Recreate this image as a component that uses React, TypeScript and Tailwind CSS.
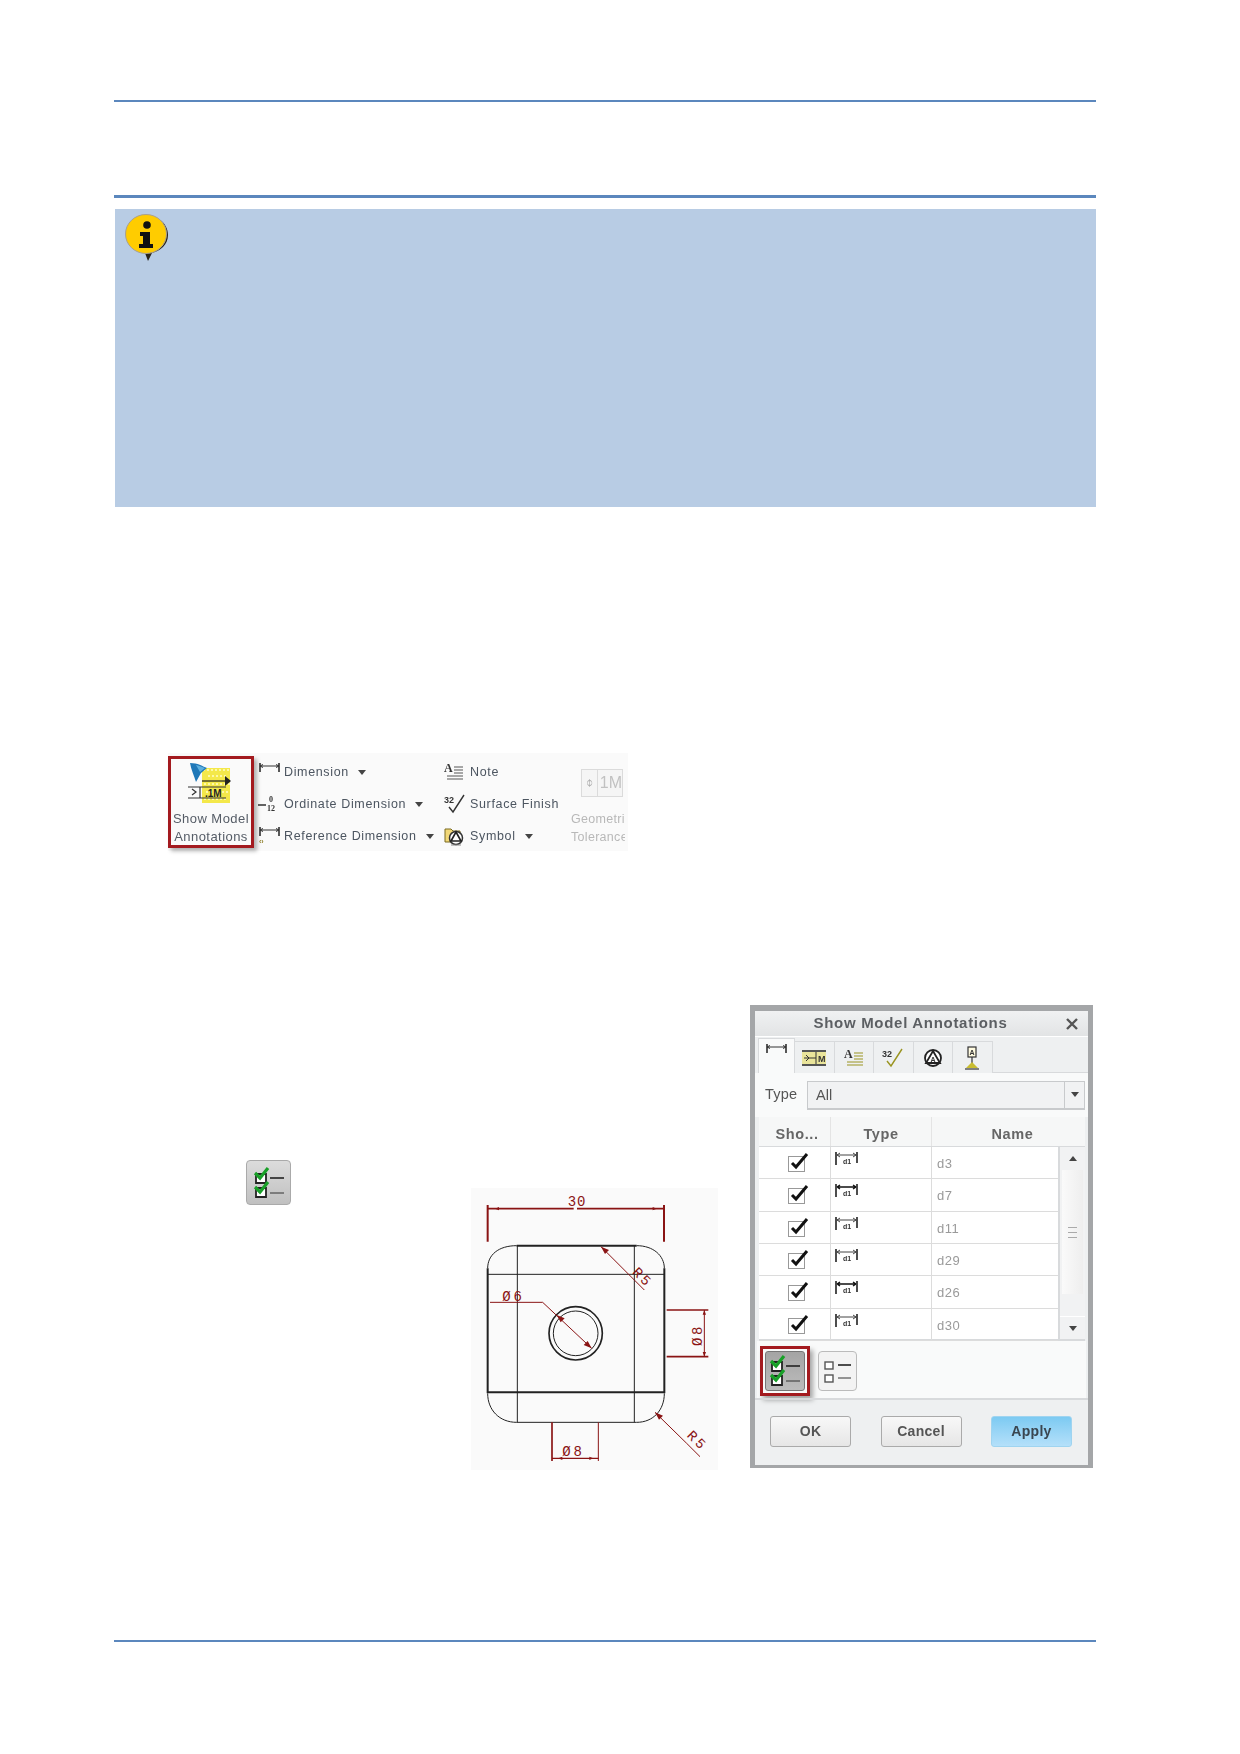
const F = "font-['Liberation_Sans',Arial,sans-serif]";

function DimIcon({ fill = false }: { fill?: boolean }) {
  return (
    <svg width="24" height="14" viewBox="0 0 24 14" className="shrink-0">
      <path d="M1 0v13M22 0v11" stroke="#222" strokeWidth="1.6" fill="none" />
      <path d="M2 3h19M2 3l3-2M2 3l3 2M21 3l-3-2M21 3l-3 2" stroke={fill ? "#111" : "#444"} strokeWidth={fill ? 1.4 : 1} fill="none" />
      <text x="8" y="12" fontSize="7" fontWeight="700" fill="#333" fontFamily="Liberation Sans">d1</text>
    </svg>
  );
}

function PlainDim({ ref2 = false }: { ref2?: boolean }) {
  return (
    <svg width="24" height="20" viewBox="0 0 24 20" className="shrink-0">
      <path d="M2 1v9M21 1v9" stroke="#222" strokeWidth="1.5" fill="none" />
      <path d="M2 4h19M2 4l3-1.5M2 4l3 1.5M21 4l-3-1.5M21 4l-3 1.5" stroke="#333" strokeWidth="1" fill="none" />
      {ref2 && <text x="1" y="18" fontSize="7" fill="#8a7a20" fontWeight="700" fontFamily="Liberation Sans">‹›</text>}
    </svg>
  );
}

function ShowIcon() {
  return (
    <svg width="46" height="44" viewBox="0 0 46 44" className="shrink-0">
      <rect x="14" y="6" width="28" height="35" fill="#f4e84a" />
      <path d="M15 8h26M20 14h20M16 22h26M18 30h22M16 37h24" stroke="#fdf8a8" strokeWidth="2" strokeDasharray="2 2" />
      <path d="M2 1c8 0 12 3 17 5l-6 5-5 9c-2-6-5-13-6-19z" fill="#1f78b8" />
      <path d="M8 3c4 1 6 2 9 3l-5 4z" fill="#5cb0e0" />
      <path d="M14 19h27" stroke="#222" strokeWidth="1.2" />
      <path d="M37 14l6 5-6 5z" fill="#222" />
      <path d="M0 25h38M0 36h38" stroke="#333" strokeWidth="1.2" />
      <path d="M12 25v11" stroke="#333" strokeWidth="1.2" />
      <path d="M4 27l4 3-4 3" stroke="#333" fill="none" strokeWidth="1.2" />
      <text x="17" y="35" fontSize="10" fontWeight="700" fill="#222" fontFamily="Liberation Sans">.1M</text>
    </svg>
  );
}

function NoteIcon({ c = "#555" }: { c?: string }) {
  return (
    <svg width="20" height="20" viewBox="0 0 20 20" className="shrink-0">
      <text x="0" y="10" fontSize="12" fontWeight="700" fill="#333" fontFamily="Liberation Serif">A</text>
      <path d="M10 5h9M10 8h9M10 11h9M3 14h16M3 17h16" stroke={c} strokeWidth="1" />
    </svg>
  );
}

function SurfIcon({ c = "#333" }: { c?: string }) {
  return (
    <svg width="22" height="20" viewBox="0 0 22 20" className="shrink-0">
      <text x="0" y="9" fontSize="9" fontWeight="700" fill="#333" fontFamily="Liberation Sans">32</text>
      <path d="M5 13l4 5L20 1" stroke={c} strokeWidth="1.4" fill="none" />
    </svg>
  );
}

function SymbolIcon() {
  return (
    <svg width="21" height="20" viewBox="0 0 21 20" className="shrink-0">
      <path d="M1 16V3h6l2 2h7v11z" fill="#f2d878" stroke="#7a6a20" strokeWidth="1" />
      <circle cx="12" cy="12" r="6.5" fill="#fff" stroke="#333" strokeWidth="1.5" />
      <path d="M12 6l5 9H7z" fill="none" stroke="#222" strokeWidth="1.6" />
      <path d="M7 19h10" stroke="#888" strokeWidth="1" />
    </svg>
  );
}

function Caret() {
  return <span className="w-0 h-0 border-x-[4px] border-x-transparent border-t-[5px] border-t-[#444] inline-block" />;
}

function RibbonRow({ icon, label, caret }: { icon: React.ReactNode; label: string; caret?: boolean }) {
  return (
    <div className="flex items-center h-[32px]">
      <div className="w-[26px] flex justify-start shrink-0">{icon}</div>
      <span className="text-[12.5px] tracking-[0.65px] text-[#4c5560] whitespace-nowrap">{label}</span>
      {caret && <span className="flex ml-[9px]"><Caret /></span>}
    </div>
  );
}

function Ribbon() {
  return (
    <div className="ml-[54px] mt-[246px] flex items-start w-[460px] h-[98px] bg-[#fafafa] pt-[3px] blur-[0.35px]">
      <div className="w-[86px] h-[92px] border-[3px] border-[#a31a1f] shadow-[3px_3px_4px_rgba(0,0,0,0.3)] flex flex-col items-center pt-[3px] shrink-0">
        <ShowIcon />
        <div className="text-[13px] leading-[18px] tracking-[0.45px] text-[#555c66] text-center mt-[4px] whitespace-nowrap">
          Show Model<br />Annotations
        </div>
      </div>
      <div className="w-[186px] ml-[4px] shrink-0 -ml-[0px]">
        <RibbonRow icon={<PlainDim />} label="Dimension" caret />
        <RibbonRow
          icon={
            <svg width="22" height="18" viewBox="0 0 22 18">
              <path d="M0 10h8" stroke="#222" strokeWidth="1.4" />
              <text x="11" y="7" fontSize="8" fontWeight="700" fill="#333" fontFamily="Liberation Serif">0</text>
              <text x="9" y="16" fontSize="8" fontWeight="700" fill="#333" fontFamily="Liberation Serif">12</text>
            </svg>
          }
          label="Ordinate Dimension"
          caret
        />
        <RibbonRow icon={<PlainDim ref2 />} label="Reference Dimension" caret />
      </div>
      <div className="shrink-0 w-[127px]">
        <RibbonRow icon={<NoteIcon />} label="Note" />
        <RibbonRow icon={<SurfIcon />} label="Surface Finish" />
        <RibbonRow icon={<SymbolIcon />} label="Symbol" caret />
      </div>
      <div className="shrink-0 w-[54px] overflow-hidden opacity-50 pt-[13px]">
        <div className="flex ml-[10px] w-[42px] h-[28px] border border-[#bbb] bg-[#f0f0f0]">
          <div className="w-[17px] border-r border-[#bbb] flex items-center justify-center text-[12px] text-[#666]">⌽</div>
          <div className="text-[16px] text-[#888] leading-[26px] pl-[2px]">1M</div>
        </div>
        <div className="text-[12.5px] leading-[18px] tracking-[0.3px] text-[#777] whitespace-nowrap mt-[13px]">
          Geometric<br />Tolerance
        </div>
      </div>
    </div>
  );
}

function CheckAll() {
  return (
    <svg width="32" height="32" viewBox="0 0 32 32">
      <path d="M3 7h10v9H3zM3 21h10v9H3z" fill="#fff" stroke="#222" strokeWidth="1.8" />
      <path d="M2 6l5 5 8-10" fill="none" stroke="#18a028" strokeWidth="3.2" />
      <path d="M2 20l5 5 8-10" fill="none" stroke="#18a028" strokeWidth="3.2" />
      <path d="M17 11h14" stroke="#222" strokeWidth="1.6" />
      <path d="M17 26h14" stroke="#333" strokeWidth="1" />
    </svg>
  );
}

function CheckNone() {
  return (
    <svg width="28" height="24" viewBox="0 0 28 24">
      <rect x="1" y="3" width="8" height="7" fill="#fff" stroke="#555" strokeWidth="1.4" />
      <rect x="1" y="16" width="8" height="7" fill="#fff" stroke="#555" strokeWidth="1.4" />
      <path d="M14 6h13" stroke="#222" strokeWidth="1.6" />
      <path d="M14 19h13" stroke="#333" strokeWidth="1" />
    </svg>
  );
}

function Row({ name, i }: { name: string; i: number }) {
  return (
    <div className="flex h-[32.33px] shrink-0 border-b border-[#dcdcdc]">
      <div className="w-[72px] border-r border-[#dcdcdc] flex justify-center pt-[9px] pl-[3px]">
        <div className="relative w-[17px] h-[16px] border border-[#999] bg-white">
          <svg width="20" height="18" viewBox="0 0 20 18" className="absolute left-[1px] top-[-5px]">
            <path d="M2 11l4 4 11-13" fill="none" stroke="#111" strokeWidth="3" />
          </svg>
        </div>
      </div>
      <div className="w-[101px] border-r border-[#dcdcdc] pl-[4px] pt-[5px]">
        <DimIcon fill={i === 1 || i === 4} />
      </div>
      <div className="flex-1 pl-[5px] pt-[9px] text-[13px] leading-[15px] tracking-[0.5px] text-[#9a9a9a]">{name}</div>
    </div>
  );
}

function Tab({ children }: { children: React.ReactNode }) {
  return (
    <div className="w-[39.5px] h-[32px] border-t border-r border-[#d8dadc] bg-[#eef0f1] flex items-center justify-center">{children}</div>
  );
}

function Btn({ label, blue = false }: { label: string; blue?: boolean }) {
  return (
    <div
      className={`w-[81px] h-[31px] rounded-[3px] border flex items-center justify-center text-[14px] font-bold tracking-[0.3px] ${
        blue
          ? "bg-gradient-to-b from-[#7ccaf2] to-[#b4e0fa] border-[#9fd4f0] text-[#3a4650]"
          : "bg-gradient-to-b from-[#f8f8f8] to-[#e6e6e6] border-[#aaa] text-[#555]"
      }`}
    >
      {label}
    </div>
  );
}

function Dialog() {
  const names = ["d3", "d7", "d11", "d29", "d26", "d30"];
  return (
    <div className="ml-[32px] w-[343px] h-[463px] border-[6px] border-b-[3px] border-x-[5px] border-[#a4a6a8] bg-[#eef0f1] flex flex-col shrink-0 blur-[0.3px]">
      <div className="h-[25px] flex items-center shrink-0 bg-gradient-to-b from-[#f0f1f2] to-[#e2e4e5]">
        <div className="flex-1 text-center text-[15px] font-bold tracking-[0.7px] text-[#5c5f63]">Show Model Annotations</div>
        <svg width="12" height="12" viewBox="0 0 12 12" className="mr-[10px]">
          <path d="M1 1l10 10M11 1L1 11" stroke="#555" strokeWidth="2.4" />
        </svg>
      </div>
      <div className="h-[37px] flex items-end pl-[3px] pt-[2px] shrink-0 border-t border-[#fff]">
        <div className="w-[37px] h-[35px] bg-[#f9fafa] border-t border-x border-[#d8dadc] pl-[6px] pt-[4px]">
          <PlainDim />
        </div>
        <Tab>
          <svg width="24" height="16" viewBox="0 0 24 16">
            <path d="M0 1h24M0 15h24" stroke="#222" strokeWidth="1.4" />
            <rect x="0" y="2" width="24" height="12" fill="#e9e49a" />
            <path d="M14 2v12M2 8h12" stroke="#333" strokeWidth="1" />
            <path d="M4 5l3 3-3 3" fill="none" stroke="#333" />
            <text x="16" y="12" fontSize="9" fontWeight="700" fill="#333" fontFamily="Liberation Sans">M</text>
          </svg>
        </Tab>
        <Tab><NoteIcon c="#9a9420" /></Tab>
        <Tab><SurfIcon c="#9a9420" /></Tab>
        <Tab>
          <svg width="20" height="18" viewBox="0 0 20 18">
            <circle cx="10" cy="9" r="8" fill="#fff" stroke="#222" strokeWidth="1.8" />
            <path d="M10 2l7 12H3z" fill="#fff" stroke="#222" strokeWidth="1.8" />
            <text x="7.5" y="13" fontSize="7" fontWeight="700" fill="#333" fontFamily="Liberation Sans">A</text>
          </svg>
        </Tab>
        <Tab>
          <svg width="14" height="24" viewBox="0 0 14 24">
            <rect x="3" y="1" width="8" height="10" fill="#fffbe0" stroke="#333" strokeWidth="1.2" />
            <text x="4.5" y="9" fontSize="7" fontWeight="700" fill="#333" fontFamily="Liberation Sans">A</text>
            <path d="M7 11v6" stroke="#333" strokeWidth="1.2" />
            <path d="M7 16l6 6H1z" fill="#c8bc30" />
            <path d="M0 23h14" stroke="#333" strokeWidth="1.2" />
          </svg>
        </Tab>
        <div className="flex-1 h-[1px] bg-[#d8dadc]" />
      </div>
      <div className="h-[44px] shrink-0 bg-[#f9fafa] flex items-center pl-[3px] pr-[3px]">
        <span className="text-[14.5px] text-[#555] tracking-[0.2px] w-[49px] pl-[7px]">Type</span>
        <div className="flex-1 h-[29px] flex border border-[#c8cacc] border-b-2 bg-[#f1f2f3]">
          <span className="flex-1 pl-[8px] text-[14.5px] leading-[26px] text-[#555]">All</span>
          <div className="w-[20px] border-l border-[#c8cacc] flex items-center justify-center"><Caret /></div>
        </div>
      </div>
      <div className="ml-[4px] mr-[3px] h-[224px] shrink-0 flex flex-col bg-white">
        <div className="h-[30px] shrink-0 flex bg-[#f6f7f7] border-b border-[#d8dadc] text-[14.5px] font-bold tracking-[0.6px] text-[#666]">
          <div className="w-[72px] border-r border-[#e4e4e4] flex items-end justify-center pl-[5px]">Sho...</div>
          <div className="w-[101px] border-r border-[#e4e4e4] flex items-end justify-center">Type</div>
          <div className="flex-1 flex items-end justify-center pl-[8px]">Name</div>
        </div>
        <div className="flex h-[194px] shrink-0 border-b-2 border-[#d8dadc]">
          <div className="flex-1 flex flex-col">
            {names.map((n, i) => <Row key={n} name={n} i={i} />)}
          </div>
          <div className="w-[27px] bg-[#f1f2f3] border-l-2 border-[#d8dadc] flex flex-col shrink-0">
            <div className="h-[23px] flex items-center justify-center">
              <span className="w-0 h-0 border-x-[4px] border-x-transparent border-b-[5px] border-b-[#444]" />
            </div>
            <div className="h-[124px] mx-[2px] bg-gradient-to-r from-[#fafafa] to-[#eeeeee] flex items-center justify-center shrink-0">
              <div className="w-[9px] h-[11px] border-y border-[#aaa] flex items-center"><div className="w-full h-px bg-[#aaa]" /></div>
            </div>
            <div className="flex-1" />
            <div className="h-[23px] flex items-center justify-center border-t border-[#fff]"><Caret /></div>
          </div>
        </div>
      </div>
      <div className="h-[57px] shrink-0 bg-[#f9fafa] flex items-start mx-[2px] pl-[3px] pt-[5px] gap-[8px]">
        <div className="w-[50px] h-[50px] border-[3px] border-[#a31a1f] shadow-[3px_4px_5px_rgba(0,0,0,0.35)] p-[2px] shrink-0">
          <div className="w-full h-full rounded-[3px] bg-gradient-to-b from-[#a4a4a4] to-[#bcbcbc] border border-[#777] flex items-center justify-center">
            <CheckAll />
          </div>
        </div>
        <div className="w-[39px] h-[40px] mt-[5px] rounded-[4px] bg-[#f3f3f3] border border-[#bbb] flex items-center justify-center">
          <CheckNone />
        </div>
      </div>
      <div className="flex-1 border-t-2 border-[#d8dadc] flex items-start justify-between pl-[15px] pt-[16px] pr-[16px]">
        <Btn label="OK" />
        <Btn label="Cancel" />
        <Btn label="Apply" blue />
      </div>
    </div>
  );
}

function Drawing() {
  const red = "#8a1414";
  const dark = "#222";
  const t = { fontFamily: "Liberation Mono", fill: red, fontSize: 42, letterSpacing: 8 } as const;
  return (
    <div className="ml-[180px] mt-[183px] w-[247px] h-[282px] bg-[#fafafa] shrink-0">
      <svg width="247" height="282" viewBox="18 24 741 846">
        <g fill="none" stroke={dark}>
          <path d="M155 197h360M68 265v375M598 265v375M68 637h530" strokeWidth="6" />
          <path d="M155 197C100 197 68 225 68 265M515 197c50 0 83 30 83 68M68 640c0 50 35 87 87 87h360c50 0 83-37 83-87M68 283h530M157 197v530M508 197v530" strokeWidth="3" />
          <circle cx="332" cy="460" r="80" strokeWidth="5" />
          <circle cx="332" cy="460" r="67" strokeWidth="3" />
        </g>
        <g fill="none" stroke={red}>
          <path d="M68 75v110M597 75v110" strokeWidth="6" />
          <path d="M68 86h258M336 86h261" strokeWidth="5" />
          <path d="M408 200l130 130" strokeWidth="3" />
          <path d="M75 367h158l147 138" strokeWidth="3" />
          <path d="M605 390h125M605 530h125" strokeWidth="5" />
          <path d="M718 390v140" strokeWidth="3" />
          <path d="M261 727v116" strokeWidth="5" />
          <path d="M400 727v116" strokeWidth="3" />
          <path d="M261 835h140" strokeWidth="4" />
          <path d="M570 697l95 93 40 40" strokeWidth="3" />
        </g>
        <g fill={red}>
          <path d="M408 200l24 10-12 12zM380 505l-24-10 12-12zM275 405l24 10-12 12zM570 697l24 10-12 12z" />
          <path d="M90 86l12-5v10zM575 86l-12-5v10zM718 390l-5 14h10zM718 530l-5-14h10zM280 835l12-5v10zM385 835l-12-5v10z" />
        </g>
        <text x="308" y="78" {...t} letterSpacing={3}>30</text>
        <text x="112" y="364" {...t}>Ø6</text>
        <text x="292" y="828" {...t}>Ø8</text>
        <text transform="translate(710 498) rotate(-90)" {...t}>Ø8</text>
        <text transform="translate(500 278) rotate(45)" {...t}>R5</text>
        <text transform="translate(664 768) rotate(45)" {...t}>R5</text>
      </svg>
    </div>
  );
}

function InfoIcon() {
  return (
    <svg width="46" height="48" viewBox="0 0 46 48" className="ml-[9px] mt-[5px]">
      <path d="M10 34l11 5 3 8 4-8c8-2 16-8 16-18 0-6-3-12-8-15z" fill="#2a2418" />
      <ellipse cx="22" cy="20" rx="20.5" ry="19.5" fill="#ffcc00" stroke="#a8a090" strokeWidth="1" />
      <circle cx="23" cy="11" r="3.8" fill="#111" />
      <path d="M16 18h10v12h3v4H15v-4h4v-8h-3z" fill="#111" />
    </svg>
  );
}

export default function App() {
  return (
    <div className={`w-[1240px] h-[1754px] bg-white pt-[100px] pl-[114px] overflow-hidden ${F}`}>
      <div className="w-[982px] h-[2px] bg-[#5b87bd]" />
      <div className="w-[982px] h-[3px] mt-[93px] bg-[#5b87bd]" />
      <div className="w-[981px] ml-px h-[298px] mt-[11px] bg-[#b8cce4] flex items-start">
        <InfoIcon />
      </div>
      <Ribbon />
      <div className="flex items-start mt-[154px]">
        <div className="ml-[132px] mt-[155px] w-[45px] h-[45px] rounded-[4px] border border-[#aaa] bg-gradient-to-b from-[#dcdcdc] to-[#c0c0c0] flex items-center justify-center shrink-0">
          <CheckAll />
        </div>
        <Drawing />
        <Dialog />
      </div>
      <div className="w-[982px] h-[2px] mt-[170px] bg-[#5b87bd]" />
    </div>
  );
}
